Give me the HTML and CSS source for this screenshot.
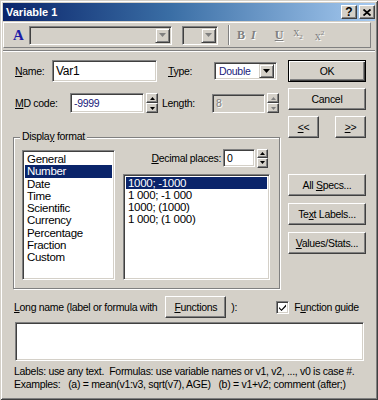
FILE: index.html
```html
<!DOCTYPE html>
<html lang="en">
<head>
  <meta charset="UTF-8" />
  <title>Variable 1</title>
  <link rel="stylesheet" href="styles.css">
</head>
<body>
  <div class="window">
    <div class="titlebar">
      <span class="title">Variable 1</span>
      <span class="tbtns">
        <span class="tbtn">?</span>
        <span class="tbtn">
          <svg width="8" height="7" viewBox="0 0 8 7"><path d="M0.5 0.5L7.5 6.5M7.5 0.5L0.5 6.5" stroke="#000" stroke-width="1.8"/></svg>
        </span>
      </span>
    </div>

    <!-- font toolbar (disabled) -->
    <div class="toolbar">
      <span class="font-a">A</span>
      <span class="combo combo-font"><span class="drop"><svg width="7" height="4"><path d="M0 0h7L3.5 4z" fill="#808080"/></svg></span></span>
      <span class="combo combo-size"><span class="drop"><svg width="7" height="4"><path d="M0 0h7L3.5 4z" fill="#808080"/></svg></span></span>
      <span class="tsep"></span>
      <span class="fmt fmt-b">B</span>
      <span class="fmt fmt-i">I</span>
      <span class="fmt fmt-u">U</span>
      <span class="fmt fmt-sub">x<span class="sub">2</span></span>
      <span class="fmt fmt-sup">x<span class="sup">2</span></span>
    </div>
    <div class="etch"></div>

    <div class="content">
      <div class="left">
        <div class="row row-name">
          <span class="lbl lbl-name"><u>N</u>ame:</span>
          <span class="field field-name">Var1</span>
          <span class="lbl lbl-type"><u>T</u>ype:</span>
          <span class="field select">
            <span class="sel-text">Double</span>
            <span class="drop"><svg width="7" height="4"><path d="M0 0h7L3.5 4z"/></svg></span>
          </span>
        </div>

        <div class="row row-md">
          <span class="lbl lbl-md"><u>M</u>D code:</span>
          <span class="field field-md">-9999</span>
          <span class="spin">
            <span class="spin-btn"><svg width="5" height="3"><path d="M0 3h5L2.5 0z"/></svg></span>
            <span class="spin-btn"><svg width="5" height="3"><path d="M0 0h5L2.5 3z"/></svg></span>
          </span>
          <span class="lbl lbl-len">Length:</span>
          <span class="field field-len">8</span>
          <span class="spin">
            <span class="spin-btn"><svg width="5" height="3"><path d="M0 3h5L2.5 0z" fill="#808080"/></svg></span>
            <span class="spin-btn"><svg width="5" height="3"><path d="M0 0h5L2.5 3z" fill="#808080"/></svg></span>
          </span>
        </div>

        <div class="group">
          <span class="legend">Displa<u>y</u> format</span>
          <div class="list list-types">
            <div class="item">General</div>
            <div class="item selected">Number</div>
            <div class="item">Date</div>
            <div class="item">Time</div>
            <div class="item">Scientific</div>
            <div class="item">Currency</div>
            <div class="item">Percentage</div>
            <div class="item">Fraction</div>
            <div class="item">Custom</div>
          </div>
          <div class="group-right">
            <div class="dec-row">
              <span class="lbl"><u>D</u>ecimal places:</span>
              <span class="field field-dec">0</span>
              <span class="spin spin-dec">
                <span class="spin-btn"><svg width="5" height="3"><path d="M0 3h5L2.5 0z"/></svg></span>
                <span class="spin-btn"><svg width="5" height="3"><path d="M0 0h5L2.5 3z"/></svg></span>
              </span>
            </div>
            <div class="list list-formats">
              <div class="item selected">1000; -1000</div>
              <div class="item">1 000; -1 000</div>
              <div class="item">1000; (1000)</div>
              <div class="item">1 000; (1 000)</div>
            </div>
          </div>
        </div>
      </div>

      <div class="right">
        <span class="btn btn-default"><span>OK</span></span>
        <span class="btn"><span>Cancel</span></span>
        <div class="nav">
          <span class="btn btn-nav"><span><u>&lt;</u>&lt;</span></span>
          <span class="btn btn-nav"><span><u>&gt;</u>&gt;</span></span>
        </div>
        <span class="btn btn-specs"><span>All <u>S</u>pecs...</span></span>
        <span class="btn btn-gap"><span>Te<u>x</u>t Labels...</span></span>
        <span class="btn btn-gap"><span><u>V</u>alues/Stats...</span></span>
      </div>
    </div>

    <div class="bottom">
      <div class="long-row">
        <span><u>L</u>ong name (label or formula with</span>
        <span class="btn btn-func"><span><u>F</u>unctions</span></span>
        <span class="paren">):</span>
        <span class="check"><svg width="7" height="7" viewBox="0 0 7 7"><path d="M0 3l2.5 2.5L7 0.5v2L2.5 7L0 4.5z"/></svg></span>
        <span class="check-lbl">F<u>u</u>nction guide</span>
      </div>
      <div class="textarea"></div>
      <p class="note">Labels: use any text.&nbsp; Formulas: use variable names or v1, v2, ..., v0 is case #.</p>
      <p class="note">Examples:&nbsp;&nbsp; (a) = mean(v1:v3, sqrt(v7), AGE)&nbsp;&nbsp; (b) = v1+v2; comment (after;)</p>
    </div>
  </div>
</body>
</html>
```

FILE: styles.css
```css
* {
  box-sizing: border-box;
}
body {
  margin: 0;
  font-family: "Liberation Sans", Arial, sans-serif;
  font-size: 10.5px;
  letter-spacing: -0.3px;
  line-height: 13px;
  color: #000;
  background: #fff;
}
u {
  text-decoration-thickness: 1px;
  text-underline-offset: 1px;
}

/* window frame */
.window {
  width: 378px;
  height: 400px;
  padding: 3px;
  background: #d4d0c8;
  box-shadow: inset 1px 1px #d4d0c8, inset -1px -1px #404040, inset 2px 2px #fff, inset -2px -2px #808080;
  overflow: hidden;
}
.titlebar {
  height: 18px;
  display: flex;
  align-items: center;
  justify-content: space-between;
  padding: 0 0 0 3px;
  background: linear-gradient(90deg, #0a246a 0%, #3a6ea5 45%, #a6caf0 100%);
  color: #fff;
  font-size: 11px;
  font-weight: bold;
  letter-spacing: 0;
}
.tbtns {
  display: flex;
  gap: 2px;
}
.tbtn {
  width: 16px;
  height: 14px;
  display: flex;
  align-items: center;
  justify-content: center;
  background: #d4d0c8;
  color: #000;
  font-size: 12px;
  border: 1px solid;
  border-color: #fff #404040 #404040 #fff;
  box-shadow: inset -1px -1px #808080;
}

/* toolbar */
.toolbar {
  margin: 1px 4px 0 0;
  height: 26px;
  display: flex;
  align-items: center;
  padding-left: 9px;
  border: 1px solid;
  border-color: #fff #808080 #808080 #fff;
}
.font-a {
  width: 10px;
  font-family: "Liberation Serif", serif;
  font-weight: bold;
  font-size: 15px;
  color: #1c1ca8;
}
.combo {
  height: 19px;
  display: flex;
  justify-content: flex-end;
  padding: 1px;
  background: #d4d0c8;
  border: 1px solid;
  border-color: #808080 #fff #fff #808080;
  box-shadow: inset 1px 1px #404040, inset -1px -1px #d4d0c8;
}
.combo-font {
  width: 143px;
  margin-left: 6px;
}
.combo-size {
  width: 36px;
  margin-left: 10px;
}
.drop {
  width: 15px;
  display: flex;
  align-items: center;
  justify-content: center;
  background: #d4d0c8;
  border: 1px solid;
  border-color: #d4d0c8 #404040 #404040 #d4d0c8;
  box-shadow: inset 1px 1px #fff, inset -1px -1px #808080;
}
.tsep {
  width: 2px;
  height: 20px;
  margin-left: 10px;
  border-left: 1px solid #808080;
  border-right: 1px solid #fff;
}
.fmt {
  font-family: "Liberation Serif", serif;
  font-weight: bold;
  font-size: 12px;
  letter-spacing: 0;
  color: #808080;
  text-shadow: 1px 1px #fff;
}
.fmt-b { margin-left: 7px; }
.fmt-i { margin-left: 6px; font-style: italic; }
.fmt-u { margin-left: 19px; text-decoration: underline; }
.fmt-sub { margin-left: 10px; font-weight: normal; }
.fmt-sup { margin-left: 12px; font-weight: normal; }
.sub {
  font-size: 7px;
  vertical-align: -3px;
}
.sup {
  font-size: 7px;
  vertical-align: 5px;
}
.etch {
  margin-top: 2px;
  border-top: 1px solid #808080;
  border-bottom: 1px solid #fff;
}

/* main area */
.content {
  display: flex;
  padding: 8px 0 0 9px;
}
.left {
  width: 268px;
}
.row {
  display: flex;
  align-items: center;
}
.row-name {
  height: 22px;
}
.row-md {
  height: 20px;
  margin-top: 11px;
}
.lbl {
  white-space: nowrap;
}
.lbl-name {
  width: 40px;
  padding-left: 3px;
}
.lbl-type {
  width: 46px;
  margin-left: 11px;
}
.lbl-md {
  width: 58px;
  padding-left: 3px;
}
.lbl-len {
  width: 50px;
  margin-left: 4px;
}
.field {
  display: flex;
  align-items: center;
  padding: 0 3px;
  background: #fff;
  border: 1px solid;
  border-color: #808080 #fff #fff #808080;
  box-shadow: inset 1px 1px #404040, inset -1px -1px #d4d0c8;
}
.field-name {
  width: 105px;
  height: 22px;
  font-size: 12px;
}
.select {
  width: 63px;
  height: 18px;
  padding: 2px 2px 2px 4px;
  justify-content: space-between;
  color: #20207a;
}
.select .drop {
  height: 14px;
  width: 15px;
}
.field-md {
  width: 74px;
  height: 20px;
  color: #20207a;
}
.field-len {
  width: 53px;
  height: 19px;
  background: #d4d0c8;
  color: #808080;
  text-shadow: 1px 1px #fff;
}
.spin {
  width: 12px;
  height: 20px;
  margin-left: 2px;
  display: flex;
  flex-direction: column;
}
.spin-btn {
  flex: 1;
  display: flex;
  align-items: center;
  justify-content: center;
  background: #d4d0c8;
  border: 1px solid;
  border-color: #fff #404040 #404040 #fff;
  box-shadow: inset -1px -1px #808080;
}

/* display format group */
.group {
  position: relative;
  display: flex;
  width: 267px;
  height: 152px;
  margin: 24px 0 0 1px;
  padding: 12px 0 0 8px;
  border: 1px solid #808080;
  box-shadow: 1px 1px #fff, inset 1px 1px #fff;
}
.legend {
  position: absolute;
  top: -8px;
  left: 6px;
  padding: 0 2px;
  background: #d4d0c8;
}
.list {
  background: #fff;
  padding: 2px;
  border: 1px solid;
  border-color: #808080 #fff #fff #808080;
  box-shadow: inset 1px 1px #404040, inset -1px -1px #d4d0c8;
}
.item {
  height: 12.25px;
  line-height: 12px;
  padding-left: 2px;
  white-space: nowrap;
}
.item.selected {
  background: #0a246a;
  color: #fff;
}
.list-types {
  width: 93px;
  height: 130px;
  font-size: 11.5px;
}
.group-right {
  width: 147px;
  margin-left: 8px;
}
.dec-row {
  display: flex;
  align-items: center;
  justify-content: flex-end;
  height: 18px;
  margin-top: -1px;
  padding-right: 2px;
}
.field-dec {
  width: 32px;
  height: 18px;
  margin-left: 2px;
}
.spin-dec {
  height: 19px;
  width: 11px;
}
.list-formats {
  height: 106px;
  margin-top: 7px;
  font-size: 11.5px;
}
.list-formats .item {
  height: 12px;
}

/* right button column */
.right {
  width: 78px;
  margin-left: 8px;
  display: flex;
  flex-direction: column;
}
.btn {
  height: 22px;
  display: flex;
  align-items: center;
  justify-content: center;
  background: #d4d0c8;
  border: 1px solid;
  border-color: #fff #404040 #404040 #fff;
  box-shadow: inset -1px -1px #808080;
  white-space: nowrap;
}
.right .btn {
  margin-top: 6px;
}
.right .btn-default {
  margin-top: 0;
  border-color: #000;
  box-shadow: inset 1px 1px #fff, inset -1px -1px #404040, inset -2px -2px #808080;
}
.nav {
  display: flex;
  justify-content: space-between;
}
.right .btn-nav {
  width: 31px;
}
.right .btn-specs {
  margin-top: 36px;
}
.right .btn-gap {
  margin-top: 7px;
}

/* long name area */
.bottom {
  padding: 7px 0 0 11px;
}
.long-row {
  display: flex;
  align-items: center;
  height: 22px;
  white-space: nowrap;
}
.long-row > * {
  flex-shrink: 0;
}
.btn-func {
  width: 61px;
  margin-left: 8px;
}
.paren {
  margin-left: 5px;
}
.check {
  width: 13px;
  height: 13px;
  margin-left: 39px;
  display: flex;
  align-items: center;
  justify-content: center;
  background: #fff;
  border: 1px solid;
  border-color: #808080 #fff #fff #808080;
  box-shadow: inset 1px 1px #404040, inset -1px -1px #d4d0c8;
}
.check-lbl {
  margin-left: 5px;
}
.textarea {
  width: 349px;
  height: 39px;
  margin: 4px 0 0 1px;
  background: #fff;
  border: 1px solid;
  border-color: #808080 #fff #fff #808080;
  box-shadow: inset 1px 1px #404040, inset -1px -1px #d4d0c8;
}
.note {
  margin: 0;
  white-space: nowrap;
}
.note:first-of-type {
  margin-top: 4px;
}
```
